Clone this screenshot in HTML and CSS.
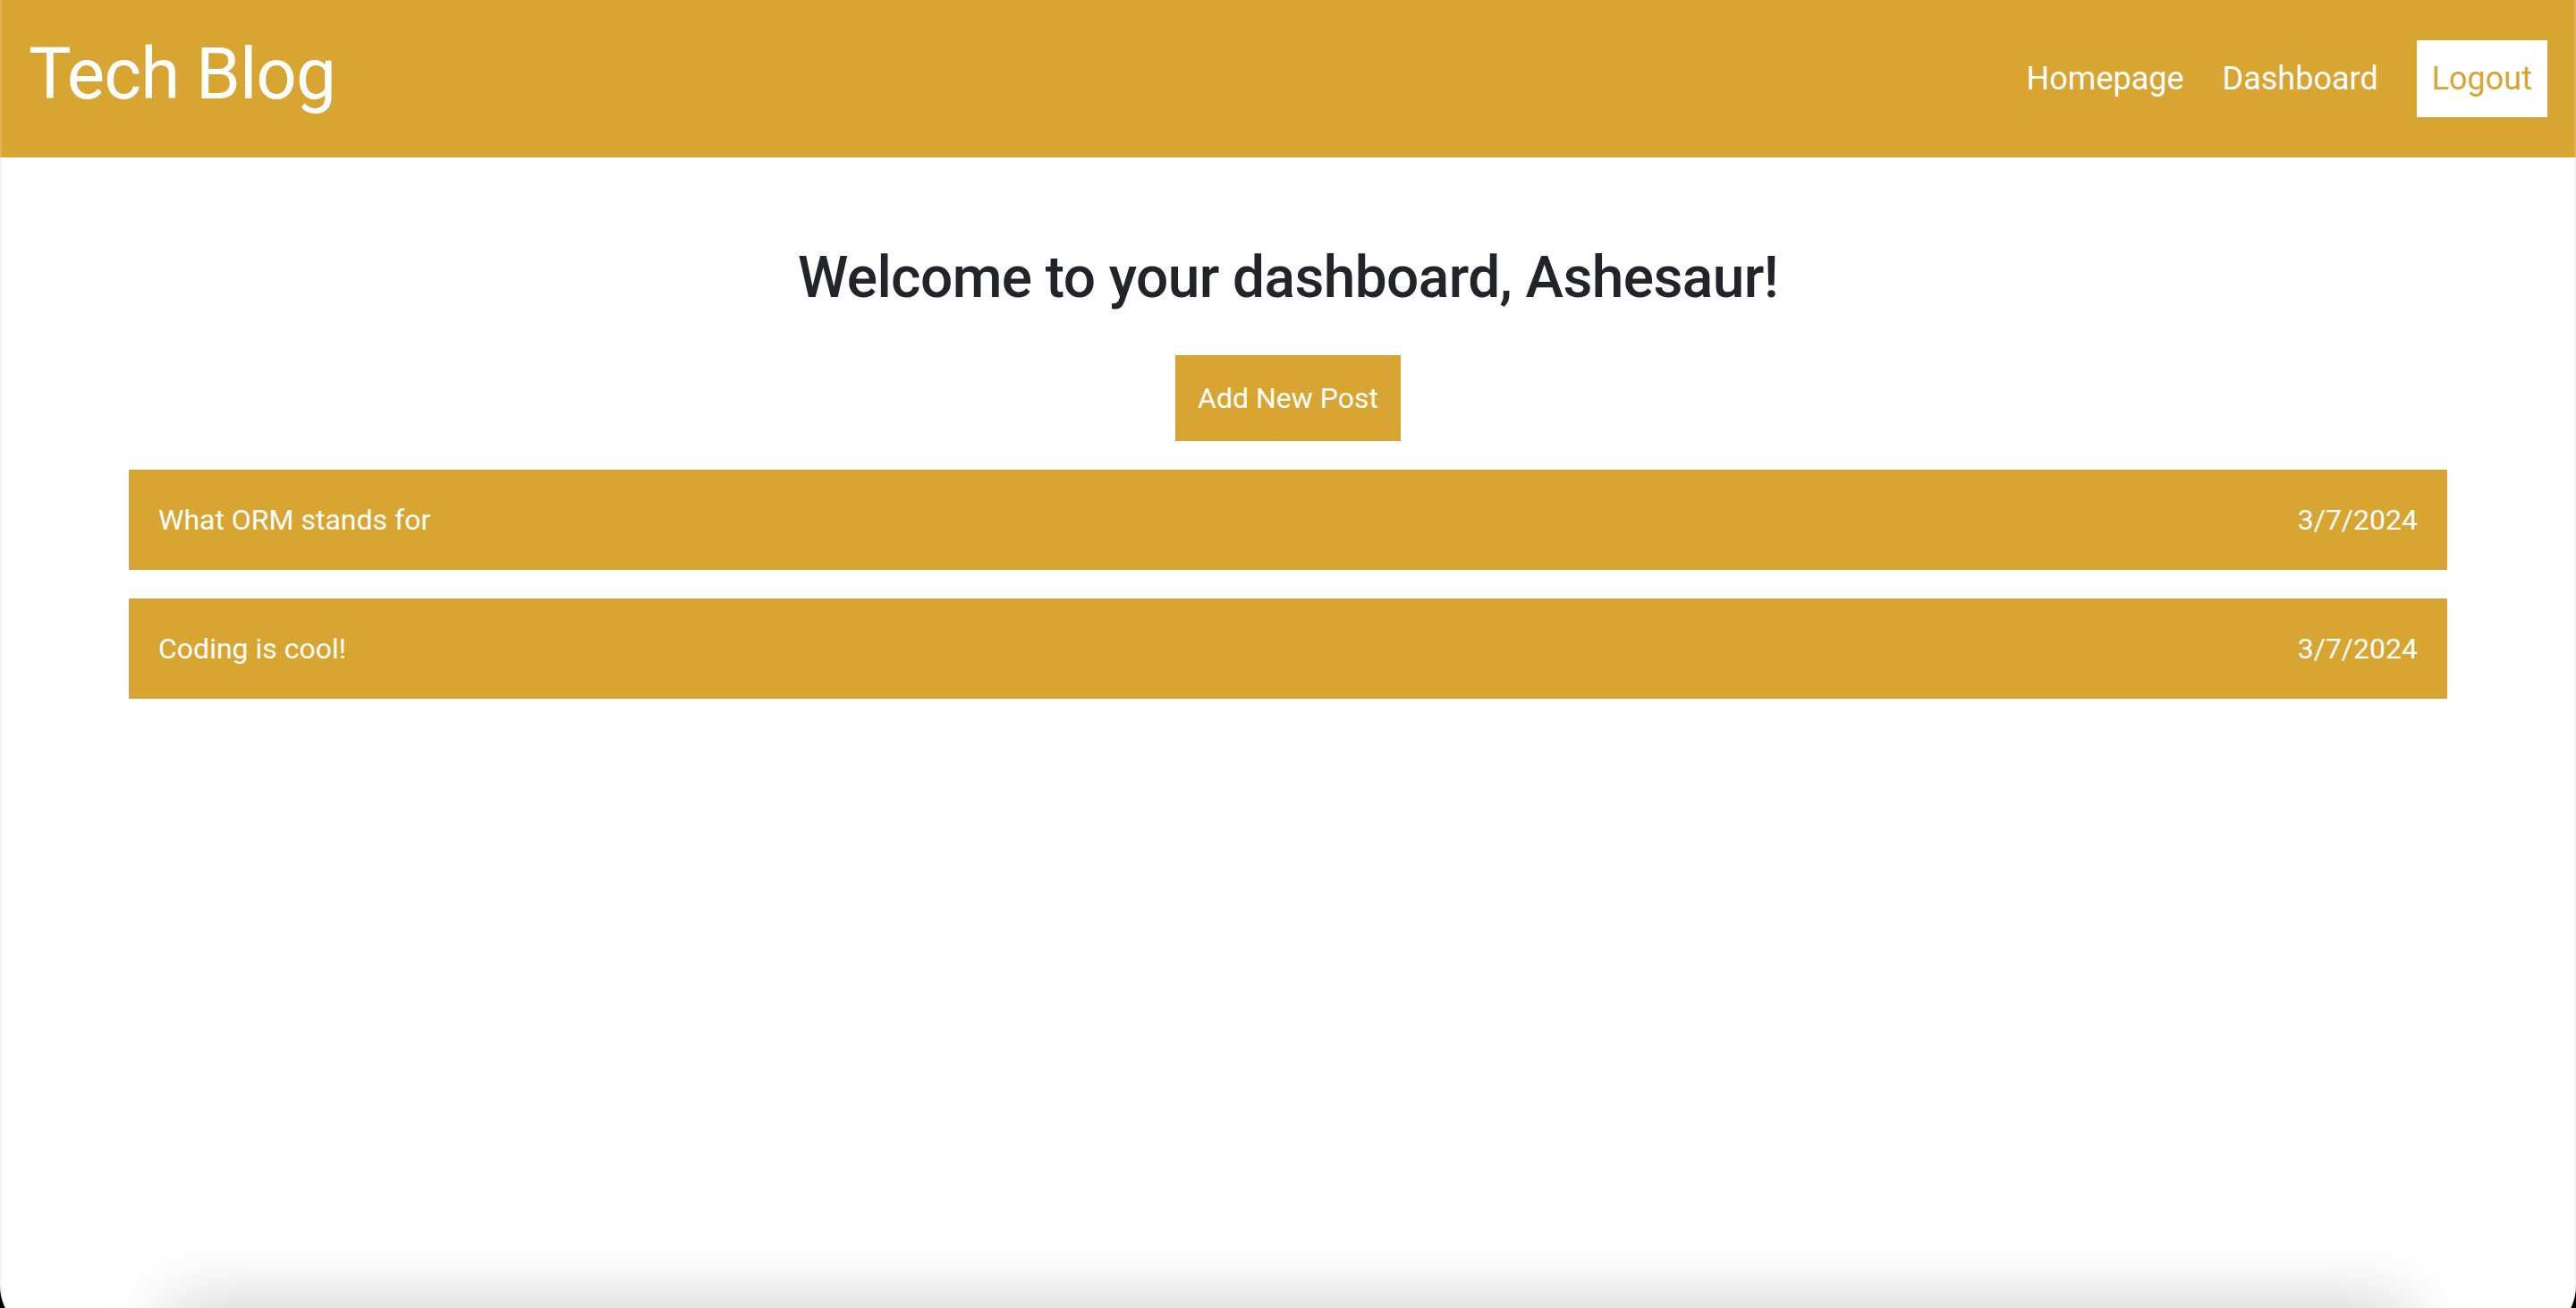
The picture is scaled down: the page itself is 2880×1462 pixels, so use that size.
FILE: index.html
```html
<!DOCTYPE html>
<html lang="en">
<head>
<meta charset="utf-8">
<title>Tech Blog</title>
<link rel="stylesheet" href="styles.css">
</head>
<body>
<div class="page">
  <header class="topbar">
    <h1 class="brand">Tech Blog</h1>
    <nav class="nav">
      <a class="nav-link" href="#">Homepage</a>
      <a class="nav-link" href="#">Dashboard</a>
      <a class="nav-link nav-logout" href="#">Logout</a>
    </nav>
  </header>
  <main class="container">
    <h2 class="welcome">Welcome to your dashboard, Ashesaur!</h2>
    <div class="actions">
      <a class="btn-add" href="#">Add New Post</a>
    </div>
    <ul class="posts">
      <li class="post"><span class="post-title">What ORM stands for</span><span class="post-date">3/7/2024</span></li>
      <li class="post"><span class="post-title">Coding is cool!</span><span class="post-date">3/7/2024</span></li>
    </ul>
  </main>
  <div class="below-fold"></div>
</div>
</body>
</html>
```

FILE: styles.css
```css
html {
  background: #000;
  height: 100%;
  overflow: hidden;
}

body {
  margin: 0;
  font-family: Roboto, "Liberation Sans", Arial, sans-serif;
  color: #212529;
}

.page {
  position: relative;
  background: #fff;
  min-height: calc(100vh + 32px);
  border-radius: 0 0 57px 57px;
  overflow: hidden;
  box-shadow: inset 2px 0 0 rgba(200, 200, 200, 0.2), inset -2px 0 0 rgba(200, 200, 200, 0.2);
}

.topbar {
  height: 176px;
  box-sizing: border-box;
  background: rgb(217, 165, 50);
  box-shadow: inset 2px 0 0 rgba(255, 255, 255, 0.18), inset -2px 0 0 rgba(255, 255, 255, 0.18);
  display: flex;
  align-items: center;
  justify-content: space-between;
  padding: 0 32px 0 32px;
}

.brand {
  margin: 0 0 10px 0;
  font-size: 80px;
  font-weight: 400;
  letter-spacing: -1px;
  line-height: 1.2;
  color: #fff;
}

.nav {
  display: flex;
  align-items: center;
  gap: 43px;
}

.nav-link {
  color: #fff;
  text-decoration: none;
  font-size: 36px;
  line-height: 1.5;
}

.nav-logout {
  background: #fff;
  color: rgb(217, 165, 50);
  padding: 16px 17px;
}

.container {
  width: 2592px;
  margin: 0 auto;
  padding-top: 97px;
}

.welcome {
  margin: 0;
  text-align: center;
  font-size: 64px;
  font-weight: 500;
  letter-spacing: -0.6px;
  line-height: 1.2;
  color: #212529;
}

.actions {
  display: flex;
  justify-content: center;
  margin-top: 47px;
}

.btn-add {
  display: block;
  background: rgb(217, 165, 50);
  color: #fff;
  text-decoration: none;
  font-size: 32px;
  line-height: 48px;
  padding: 24px 25px;
}

.posts {
  list-style: none;
  margin: 32px 0 0 0;
  padding: 0;
  display: flex;
  flex-direction: column;
  gap: 32px;
}

.post {
  height: 112px;
  box-sizing: border-box;
  background: rgb(217, 165, 50);
  color: #fff;
  display: flex;
  align-items: center;
  justify-content: space-between;
  padding: 0 33px;
  font-size: 32px;
}

.below-fold {
  position: absolute;
  top: 100vh;
  left: 190px;
  right: 190px;
  height: 200px;
  background: #fff;
  box-shadow: 0 0 80px rgba(0, 0, 0, 0.22);
}
```
